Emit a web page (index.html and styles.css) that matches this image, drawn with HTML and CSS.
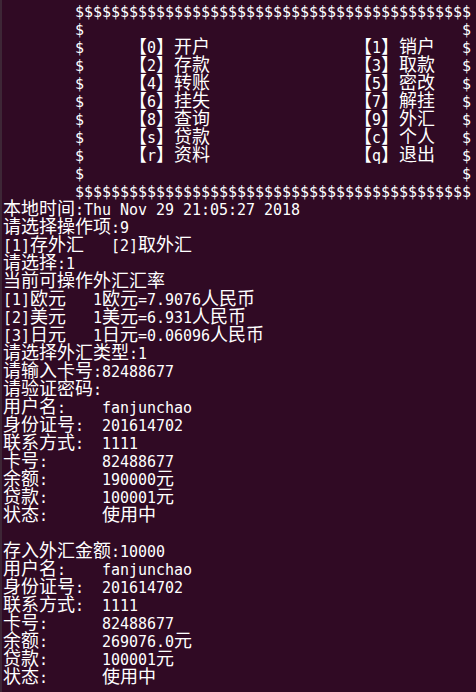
FILE: index.html
```html
<!DOCTYPE html>
<html lang="zh-CN">
<head>
    <meta charset="UTF-8">
    <meta name="viewport" content="width=device-width, initial-scale=1.0">
    <title>Terminal</title>
    <link rel="stylesheet" href="styles.css">
</head>
<body>
<div class="term">
<pre class="out">        $$$$$$$$$$$$$$$$$$$$$$$$$$$$$$$$$$$$$$$$$$$$
        $                                          $
        $     <span class="w">【</span>0<span class="w">】开户</span>                <span class="w">【</span>1<span class="w">】销户</span>   $
        $     <span class="w">【</span>2<span class="w">】存款</span>                <span class="w">【</span>3<span class="w">】取款</span>   $
        $     <span class="w">【</span>4<span class="w">】转账</span>                <span class="w">【</span>5<span class="w">】密改</span>   $
        $     <span class="w">【</span>6<span class="w">】挂失</span>                <span class="w">【</span>7<span class="w">】解挂</span>   $
        $     <span class="w">【</span>8<span class="w">】查询</span>                <span class="w">【</span>9<span class="w">】外汇</span>   $
        $     <span class="w">【</span>s<span class="w">】贷款</span>                <span class="w">【</span>c<span class="w">】个人</span>   $
        $     <span class="w">【</span>r<span class="w">】资料</span>                <span class="w">【</span>q<span class="w">】退出</span>   $
        $                                          $
        $$$$$$$$$$$$$$$$$$$$$$$$$$$$$$$$$$$$$$$$$$$$
<span class="w">本地时间</span>:Thu Nov 29 21:05:27 2018
<span class="w">请选择操作项</span>:9
[1]<span class="w">存外汇</span>   [2]<span class="w">取外汇</span>
<span class="w">请选择</span>:1
<span class="w">当前可操作外汇汇率</span>
[1]<span class="w">欧元</span>   1<span class="w">欧元</span>=7.9076<span class="w">人民币</span>
[2]<span class="w">美元</span>   1<span class="w">美元</span>=6.931<span class="w">人民币</span>
[3]<span class="w">日元</span>   1<span class="w">日元</span>=0.06096<span class="w">人民币</span>
<span class="w">请选择外汇类型</span>:1
<span class="w">请输入卡号</span>:82488677
<span class="w">请验证密码</span>:
<span class="w">用户名</span>:    fanjunchao
<span class="w">身份证号</span>:  201614702
<span class="w">联系方式</span>:  1111
<span class="w">卡号</span>:      82488677
<span class="w">余额</span>:      190000<span class="w">元</span>
<span class="w">贷款</span>:      100001<span class="w">元</span>
<span class="w">状态</span>:      <span class="w">使用中</span>

<span class="w">存入外汇金额</span>:10000
<span class="w">用户名</span>:    fanjunchao
<span class="w">身份证号</span>:  201614702
<span class="w">联系方式</span>:  1111
<span class="w">卡号</span>:      82488677
<span class="w">余额</span>:      269076.0<span class="w">元</span>
<span class="w">贷款</span>:      100001<span class="w">元</span>
<span class="w">状态</span>:      <span class="w">使用中</span></pre>
</div>
</body>
</html>
```

FILE: styles.css
```css
*{
    margin: 0;
    padding: 0;
}
html,body{
    height: 100%;
    background-color: #300a24;
}
.term{
    height: 100%;
    border-left: 2px solid #3d2636;
    padding: 3px 0 0 1px;
    overflow: hidden;
}
.out{
    font-family: "DejaVu Sans Mono", "Liberation Mono", monospace;
    font-size: 15px;
    line-height: 18px;
    letter-spacing: -0.03px;
    color: #ffffff;
    white-space: pre;
}
/* 中文字符占两列 */
.w{
    font-family: "Noto Sans CJK SC", sans-serif;
    font-size: 18px;
    letter-spacing: 0;
    line-height: 0;
}
```
